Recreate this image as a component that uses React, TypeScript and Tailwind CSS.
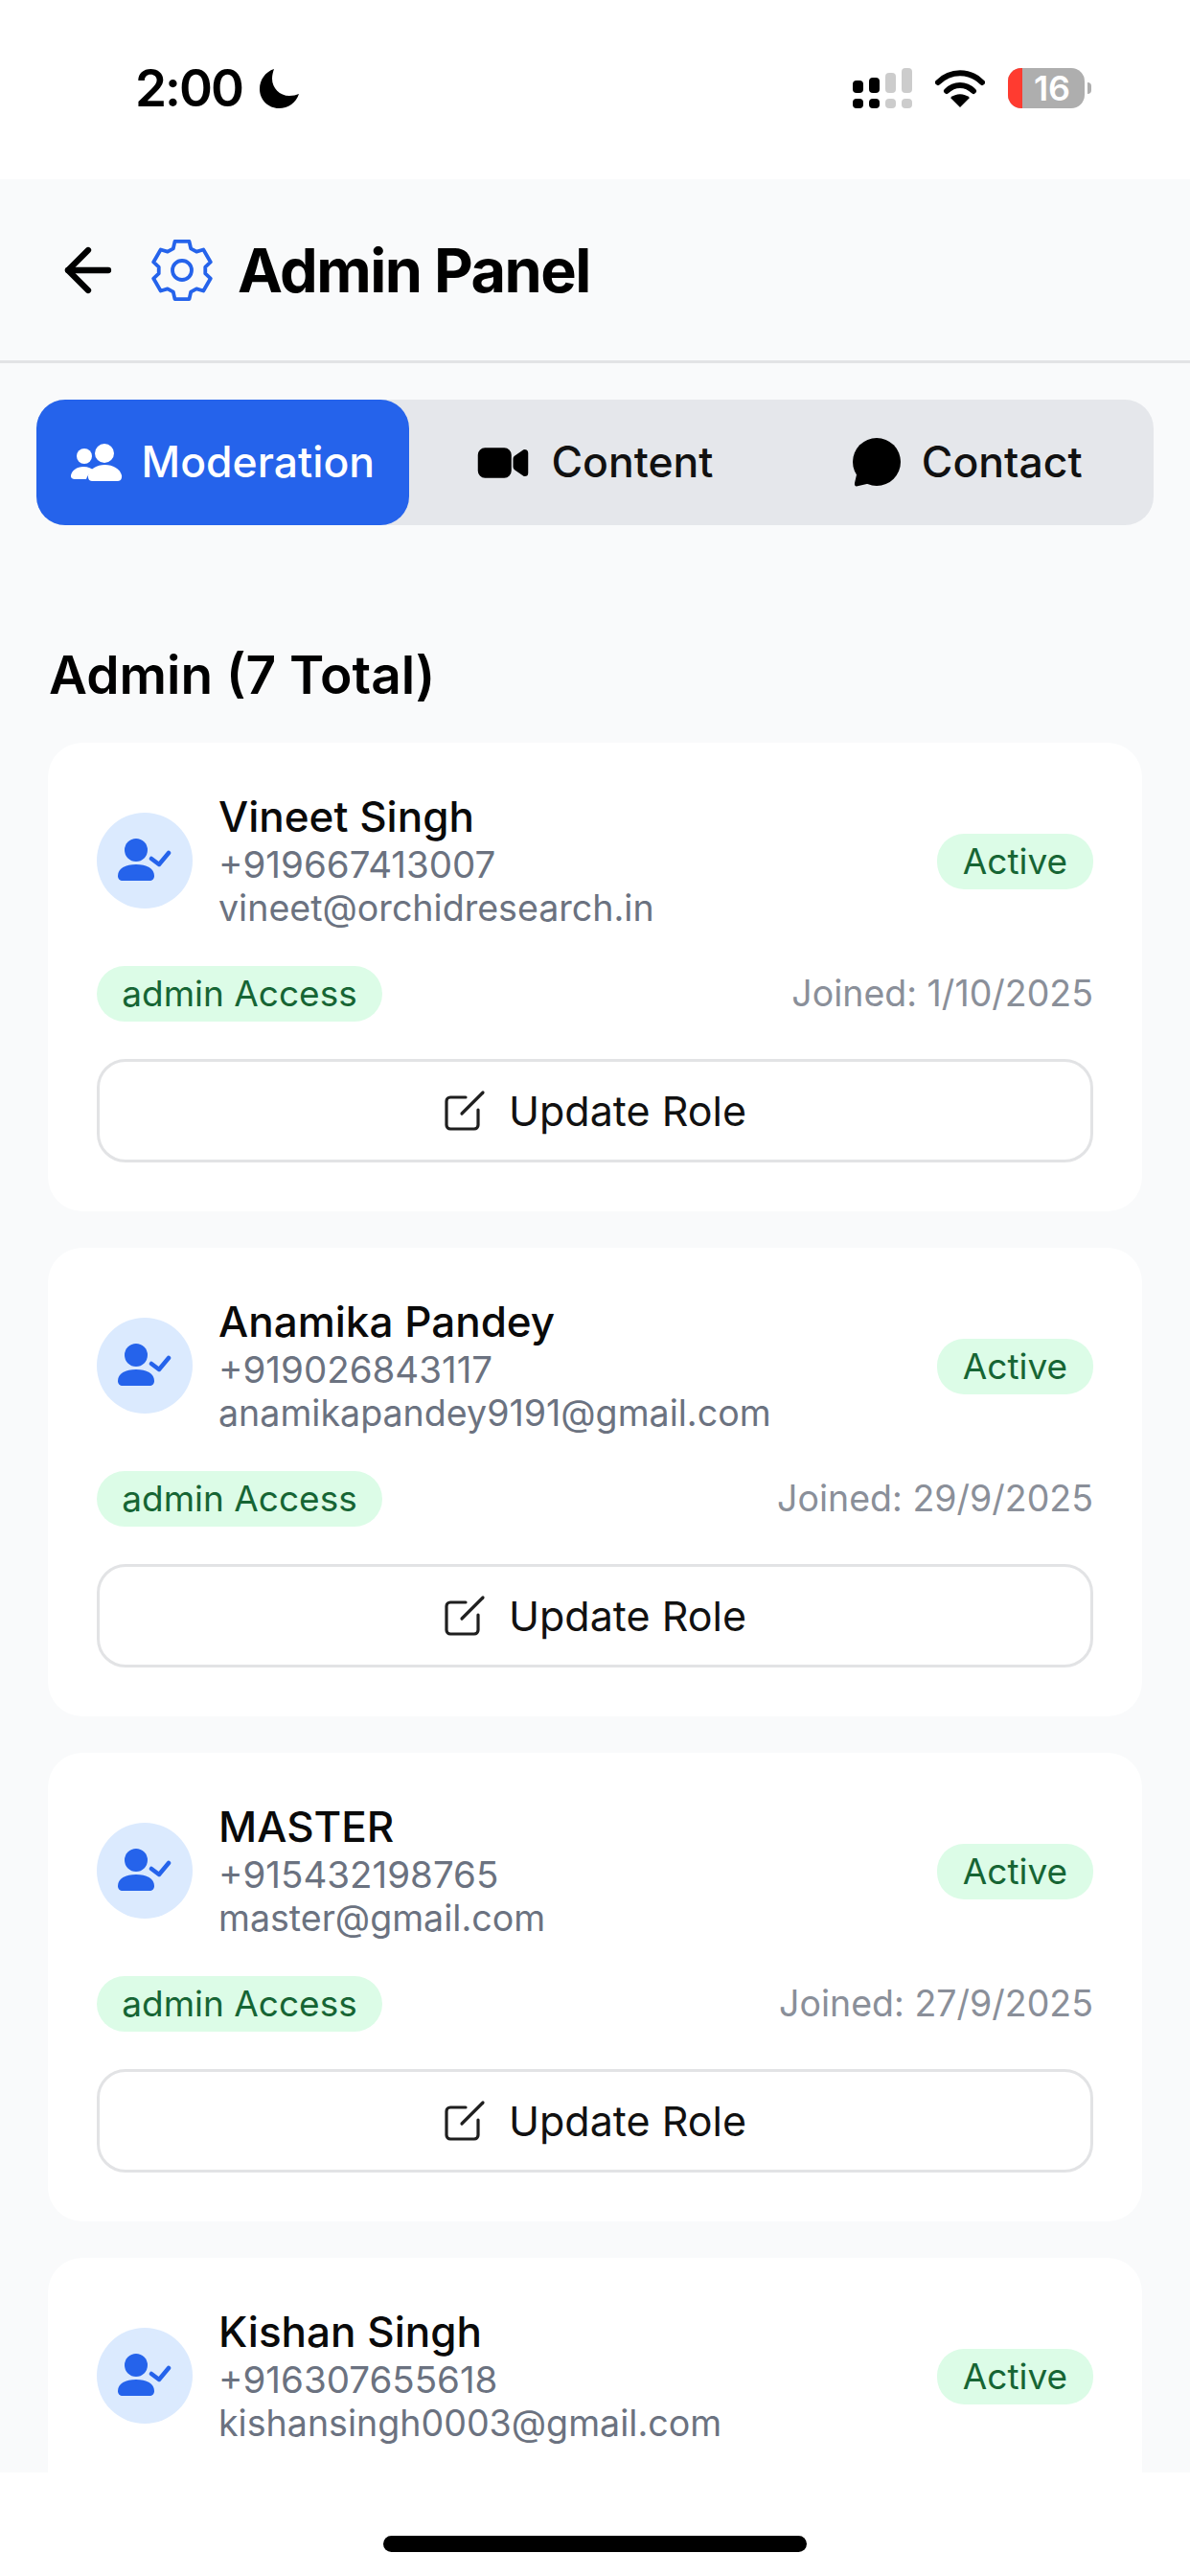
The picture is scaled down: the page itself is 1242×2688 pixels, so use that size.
import React from "react";
import { ArrowLeft } from "lucide-react";
import { IoVideocam } from "react-icons/io5";

function gearPath() {
  const pts: string[] = [];
  const pt = (deg: number, r: number) => {
    const t = ((deg - 90) * Math.PI) / 180;
    return `${(34 + r * Math.cos(t)).toFixed(2)} ${(34 + r * Math.sin(t)).toFixed(2)}`;
  };
  for (let k = 0; k < 6; k++) {
    const a = k * 60;
    pts.push(pt(a - 14, 31), pt(a + 14, 31), pt(a + 22, 24.5), pt(a + 38, 24.5));
  }
  return `M${pts.join("L")}Z`;
}

function Gear() {
  return (
    <svg width="68" height="68" viewBox="0 0 68 68" fill="none" stroke="#2563eb" strokeWidth="3.8" strokeLinejoin="round">
      <path d={gearPath()} />
      <circle cx="34" cy="34" r="10" />
    </svg>
  );
}

function UserCheck() {
  return (
    <svg width="56" height="52" viewBox="0 0 56 52" fill="#2563eb">
      <circle cx="19" cy="15" r="12" />
      <path d="M0 42c0-8 8-12 19-12s19 4 19 12c0 3-2 5-5 5H5c-3 0-5-2-5-5z" />
      <path d="M35 24l8 6 10-12" fill="none" stroke="#2563eb" strokeWidth="4.5" strokeLinecap="round" strokeLinejoin="round" />
    </svg>
  );
}

function Pen() {
  return (
    <svg width="44" height="44" viewBox="0 0 44 44" fill="none" stroke="#1f1f1f" strokeWidth="3.2" strokeLinecap="round">
      <path d="M23 8H7a4 4 0 0 0-4 4v25a4 4 0 0 0 4 4h25a4 4 0 0 0 4-4V21" />
      <path d="M19 25L41 3" />
    </svg>
  );
}

function People() {
  return (
    <svg width="54" height="39" viewBox="0 0 54 39" fill="#ffffff">
      <circle cx="14" cy="13" r="8" />
      <circle cx="35" cy="10" r="10" />
      <path d="M0 33c1-5 6-9 13-9 5 0 9 2 11 4-4 2-7 5-8 9H4c-3 0-4.500-2-4-4z" />
      <path d="M18 33c2-7 9-11 17.500-11S51 26 53 33c.5 3-1 6-4 6H22c-3 0-4.500-3-4-6z" />
    </svg>
  );
}

function Chat() {
  return (
    <svg width="50" height="51" viewBox="0 0 50 51" fill="#000">
      <circle cx="25" cy="25" r="25" />
      <path d="M5 34L2 47c-.5 3 1 4 4 3l13-3z" />
    </svg>
  );
}

function Card({ name, phone, email, joined }: { name: string; phone: string; email: string; joined?: string }) {
  return (
    <div className="shrink-0 h-[489px] rounded-[36px] bg-white px-[51px] pt-[52px]">
      <div className="flex items-center">
        <div className="-mt-[2px] flex h-[100px] w-[100px] shrink-0 items-center justify-center rounded-full bg-[#dbeafe]">
          <UserCheck />
        </div>
        <div className="ml-[27px] flex-1">
          <div className="text-[44px] leading-[50px] font-medium text-[#0a0a0a]">{name}</div>
          <div className="mt-[2px] text-[38.500px] leading-[46px] text-[#6b7280]">{phone}</div>
          <div className="text-[37.600px] leading-[46px] text-[#6b7280]">{email}</div>
        </div>
        <div className="flex h-[58px] w-[163px] items-center justify-center rounded-[28px] bg-[#dcfce7] text-[37px] text-[#166534]">
          Active
        </div>
      </div>
      {joined && (
        <>
          <div className="mt-[37px] flex items-center justify-between">
            <div className="flex h-[58px] w-[298px] items-center justify-center rounded-[29px] bg-[#dcfce7] text-[37px] text-[#166534]">
              admin Access
            </div>
            <div className="text-[37.500px] text-[#8a8f99]">Joined: {joined}</div>
          </div>
          <div className="mt-[39px] flex h-[108px] items-center justify-center gap-[24px] rounded-[30px] border-[3px] border-[#e2e3e5] bg-white">
            <Pen />
            <span className="text-[43px] text-[#111111]">Update Role</span>
          </div>
        </>
      )}
    </div>
  );
}

export default function App() {
  return (
    <div className="flex h-[2688px] w-[1242px] flex-col overflow-hidden bg-white font-['Inter',sans-serif]">
      <div className="flex h-[187px] shrink-0 items-start justify-between pl-[141px] pr-[103px] pt-[62px]">
        <div className="flex items-center gap-[18px]">
          <span className="text-[53px] leading-[60px] font-semibold tracking-[-2px] text-black">2:00</span>
          <svg width="41" height="41" viewBox="0 0 41 41" fill="#000">
            <path d="M15 0C6 3 0 11 0 21c0 11 9 20 20 20 10 0 18-6 21-15-3 1-6 2-10 2-10 0-18-8-18-18 0-4 1-7 2-10z" />
          </svg>
        </div>
        <div className="flex items-center gap-[24px] pt-[9px]">
          <svg width="62" height="42" viewBox="0 0 62 42">
            <g fill="#000">
              <rect x="0" y="13" width="11" height="13" rx="4" />
              <rect x="17" y="10" width="11" height="16" rx="4" />
              <rect x="0" y="32" width="11" height="10" rx="4" />
              <rect x="17" y="32" width="11" height="10" rx="4" />
            </g>
            <g fill="#cccccc">
              <rect x="34" y="5" width="11" height="21" rx="4" />
              <rect x="51" y="0" width="11" height="26" rx="4" />
              <rect x="34" y="32" width="11" height="10" rx="4" />
              <rect x="51" y="32" width="11" height="10" rx="4" />
            </g>
          </svg>
          <svg width="52" height="40" viewBox="0 0 52 40">
            <path d="M3 14C16 1 36 1 49 14" fill="none" stroke="#000" strokeWidth="6" strokeLinecap="round" />
            <path d="M12 23c8-8 20-8 28 0" fill="none" stroke="#000" strokeWidth="6" strokeLinecap="round" />
            <path d="M26 40L16 30c6-5 14-5 20 0z" fill="#000" />
          </svg>
          <div className="relative flex h-[42px] w-[80px] items-center justify-center overflow-hidden rounded-[14px] bg-[#aeaeae] pl-[12px]">
            <div className="absolute inset-y-0 left-0 w-[15px] bg-[#ff3b30]" />
            <span className="text-[36px] leading-none font-semibold text-white">16</span>
          </div>
          <div className="-ml-[21px] h-[12px] w-[4px] rounded-r-full bg-[#aeaeae]" />
        </div>
      </div>

      <div className="flex h-[192px] shrink-0 items-center border-b-[3px] border-[#e2e3e5] bg-[#f9fafb] pl-[56px]">
        <ArrowLeft size={72} strokeWidth={2.1} color="#000" />
        <div className="ml-[28px] flex items-center gap-[24px]">
          <Gear />
          <span className="text-[63px] leading-[70px] font-bold tracking-[-1.5px] text-black">Admin Panel</span>
        </div>
      </div>

      <div className="flex min-h-0 flex-1 flex-col overflow-hidden bg-[#f9fafb]">
        <div className="mx-[38px] mt-[38px] flex h-[131px] shrink-0 rounded-[30px] bg-[#e5e7eb]">
          <div className="flex flex-1 items-center justify-center gap-[20px] rounded-[30px] bg-[#2563eb] text-white">
            <People />
            <span className="text-[44.500px] font-medium">Moderation</span>
          </div>
          <div className="flex flex-1 items-center justify-center gap-[22px] text-[#111111]">
            <IoVideocam size={56} color="#000" />
            <span className="text-[44.500px] font-medium">Content</span>
          </div>
          <div className="flex flex-1 items-center justify-center gap-[22px] text-[#111111]">
            <Chat />
            <span className="text-[44.500px] font-medium">Contact</span>
          </div>
        </div>

        <div className="mx-[51px] mt-[131px] h-[50px] shrink-0 text-[55px] leading-[50px] font-semibold text-black">
          Admin (7 Total)
        </div>

        <div className="mx-[50px] mt-[46px] flex flex-col gap-[38px]">
          <Card name="Vineet Singh" phone="+919667413007" email="vineet@orchidresearch.in" joined="1/10/2025" />
          <Card name="Anamika Pandey" phone="+919026843117" email="anamikapandey9191@gmail.com" joined="29/9/2025" />
          <Card name="MASTER" phone="+915432198765" email="master@gmail.com" joined="27/9/2025" />
          <Card name="Kishan Singh" phone="+916307655618" email="kishansingh0003@gmail.com" />
        </div>
      </div>

      <div className="flex h-[108px] shrink-0 justify-center bg-white pt-[66px]">
        <div className="h-[17px] w-[442px] rounded-full bg-black" />
      </div>
    </div>
  );
}
